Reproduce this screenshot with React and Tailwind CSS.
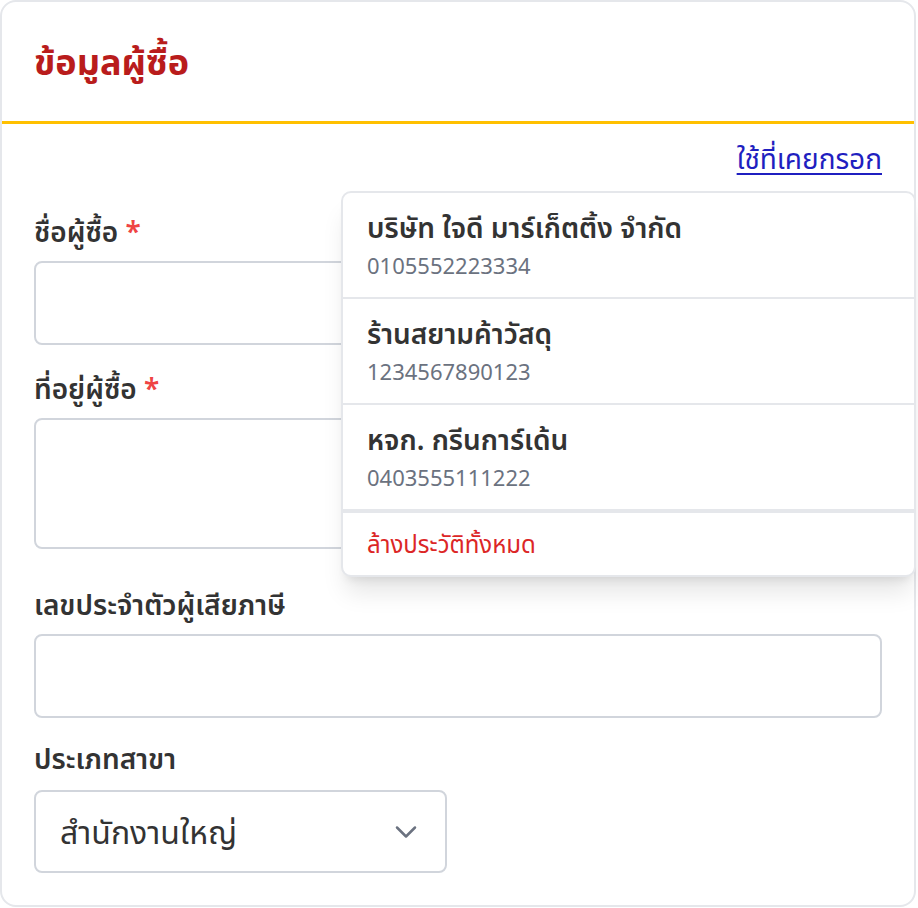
import { useState } from 'react';

const history = [
  { name: 'บริษัท ใจดี มาร์เก็ตติ้ง จำกัด', taxId: '0105552223334' },
  { name: 'ร้านสยามค้าวัสดุ', taxId: '1234567890123' },
  { name: 'หจก. กรีนการ์เด้น', taxId: '0403555111222' },
];

const font = { fontFamily: '"Noto Sans", "Noto Sans Thai", sans-serif' };

export default function App() {
  const [form, setForm] = useState({ name: '', address: '', taxId: '', branch: 'HQ' });
  const [showHistory, setShowHistory] = useState(true);

  const handleChange = (e) => {
    const { name, value } = e.target;
    setForm((prev) => ({ ...prev, [name]: value }));
  };

  const labelClass = 'block text-[28px] leading-[30px] font-semibold text-[#333333] mb-[15px]';
  const inputClass =
    'block w-full h-[84px] px-6 rounded-lg border-2 border-gray-300 bg-white text-[24px] text-[#333333] focus:outline-none';

  return (
    <div className="min-h-screen bg-white" style={font}>
      <div className="relative w-[916px] rounded-2xl border-2 border-gray-200 bg-white">
        <div className="h-[122px] flex items-center px-8 border-b-[3px] border-[#ffc000]">
          <h2 className="text-[36px] leading-[40px] font-bold text-[#b91c1c]">ข้อมูลผู้ซื้อ</h2>
        </div>

        <div className="px-8 pt-[19px] pb-8">
          <div className="flex justify-end">
            <button
              type="button"
              onClick={() => setShowHistory((v) => !v)}
              className="text-[28px] leading-[30px] text-[#1f1fc0] underline underline-offset-4"
            >
              ใช้ที่เคยกรอก
            </button>
          </div>

          <div className="mt-[43px]">
            <label className={labelClass}>
              ชื่อผู้ซื้อ <span className="text-[#ef4444]">*</span>
            </label>
            <input name="name" value={form.name} onChange={handleChange} className={inputClass} />
          </div>

          <div className="mt-[28px]">
            <label className={labelClass}>
              ที่อยู่ผู้ซื้อ <span className="text-[#ef4444]">*</span>
            </label>
            <textarea
              name="address"
              value={form.address}
              onChange={handleChange}
              className="block w-full h-[131px] px-6 py-4 rounded-lg border-2 border-gray-300 bg-white text-[24px] resize-none focus:outline-none"
            />
          </div>

          <div className="mt-[40px]">
            <label className={labelClass}>เลขประจำตัวผู้เสียภาษี</label>
            <input name="taxId" value={form.taxId} onChange={handleChange} className={inputClass} />
          </div>

          <div className="mt-[25px]">
            <label className="block text-[28px] leading-[30px] font-semibold text-[#333333] mb-[17px]">ประเภทสาขา</label>
            <div className="relative w-[413px]">
              <select
                name="branch"
                value={form.branch}
                onChange={handleChange}
                className="block w-full h-[83px] pl-6 pr-12 appearance-none rounded-lg border-2 border-gray-300 bg-white text-[32px] text-[#333333] focus:outline-none"
              >
                <option value="HQ">สำนักงานใหญ่</option>
                <option value="BRANCH">สาขา</option>
              </select>
              <svg
                className="pointer-events-none absolute right-[30px] top-1/2 -translate-y-1/2"
                width="22"
                height="13"
                viewBox="0 0 22 13"
                fill="none"
                stroke="#6b7280"
                strokeWidth="2.5"
                strokeLinecap="round"
                strokeLinejoin="round"
              >
                <path d="M2 2l9 9 9-9" />
              </svg>
            </div>
          </div>
        </div>

        {showHistory && (
          <div className="absolute left-[339px] top-[189px] w-[575px] rounded-[10px] border-2 border-gray-200 bg-white shadow-xl overflow-hidden">
            {history.map((item) => (
              <button
                key={item.taxId}
                type="button"
                className="block w-full text-left px-6 pt-[19px] pb-[18px] border-b-2 border-gray-200 hover:bg-gray-50"
              >
                <div className="text-[28px] leading-[30px] font-semibold text-[#333333]">{item.name}</div>
                <div className="mt-[9px] text-[22px] leading-[28px] text-[#6b7280]">{item.taxId}</div>
              </button>
            ))}
            <div className="border-t-2 border-gray-200">
              <button type="button" className="block w-full text-left px-6 h-[62px] text-[24px] text-[#dc2626]">
                ล้างประวัติทั้งหมด
              </button>
            </div>
          </div>
        )}
      </div>
    </div>
  );
}
